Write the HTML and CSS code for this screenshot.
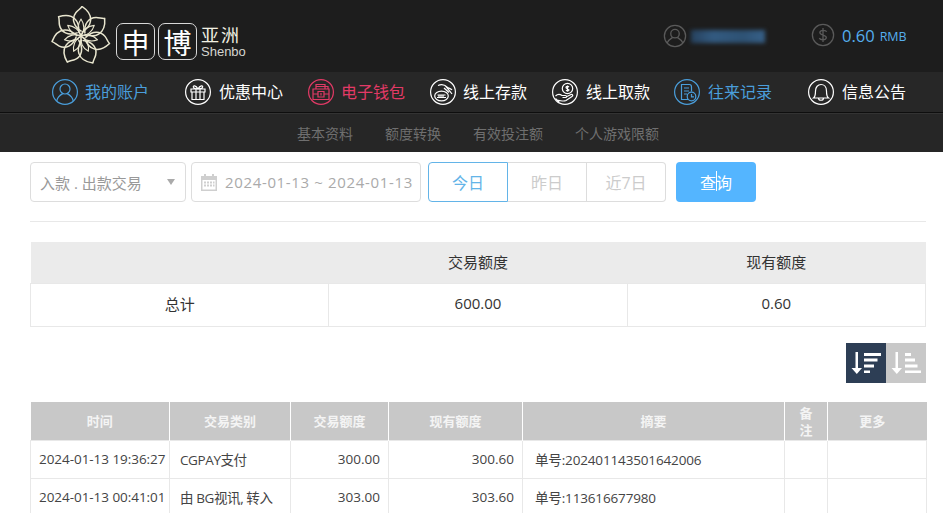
FILE: index.html
```html
<!DOCTYPE html>
<html lang="zh-CN">
<head>
<meta charset="utf-8">
<title>申博亚洲</title>
<link rel="stylesheet" href="styles.css">
</head>
<body>
<header class="topbar">
  <div class="logo">
    <svg class="logo-flower" viewBox="-30 -30 60 60" fill="none" stroke="#e9e6cf" stroke-width="1.5" stroke-linejoin="round" stroke-linecap="round">
      <defs>
        <g id="petal">
          <path d="M0-5C-8-10-9.500-18-5-23.500C-3-26-0.500-27 1-29.500C5.500-26.500 10.500-22 9.500-15C9-10 5-6.500 1.500-4"/>
          <path d="M0 0C-4-5-3.500-12 0-17C3.500-12 4-5 0 0Z" stroke-width="1.100"/>
        </g>
      </defs>
      <use href="#petal"/>
      <use href="#petal" transform="rotate(51.4)"/>
      <use href="#petal" transform="rotate(102.9)"/>
      <use href="#petal" transform="rotate(154.3)"/>
      <use href="#petal" transform="rotate(205.7)"/>
      <use href="#petal" transform="rotate(257.1)"/>
      <use href="#petal" transform="rotate(308.6)"/>
    </svg>
    <span class="logo-box">申</span>
    <span class="logo-box">博</span>
    <span class="logo-text"><b>亚洲</b><i>Shenbo</i></span>
  </div>
  <div class="account">
    <svg class="acct-icon" viewBox="0 0 26 26" fill="none" stroke="#5a5a5a" stroke-width="1.4">
      <circle cx="13" cy="13" r="11.5"/>
      <circle cx="13" cy="10.5" r="4.6"/>
      <path d="M4.5 20.5C6 16.8 9 15.5 10.5 14.5M21.5 20.5C20 16.8 17 15.5 15.500 14.5"/>
    </svg>
    <span class="blurred"></span>
  </div>
  <div class="balance">
    <svg class="acct-icon" viewBox="0 0 26 26" fill="none" stroke="#5a5a5a" stroke-width="1.4">
      <circle cx="13" cy="13" r="11.5"/>
      <path d="M17 9.5C16 7.6 10 7 9.6 10.2C9.2 13.8 17 12.4 16.6 16C16.2 19 10 18.6 9 16.4M13 5.5V20.5"/>
    </svg>
    <span class="amount">0.60</span><span class="unit">RMB</span>
  </div>
</header>

<nav class="mainnav">
  <a class="navitem blue">
    <svg viewBox="0 0 26 26" fill="none" stroke="currentColor" stroke-width="1.2">
      <circle cx="13" cy="13" r="12.4"/>
      <circle cx="13" cy="10" r="5"/>
      <path d="M4.8 21.8C5.5 17.5 9 15.6 10.8 14.6M21.2 21.8C20.5 17.5 17 15.6 15.2 14.6"/>
    </svg>
    <span>我的账户</span>
  </a>
  <a class="navitem wide">
    <svg viewBox="0 0 26 26" fill="none" stroke="currentColor" stroke-width="1.2">
      <circle cx="13" cy="13" r="12.4"/>
      <path d="M6 10H20V13H6ZM7 13H19V20.5H7ZM11 10V20.5M15 10V20.5M13 10C11 6 7.5 6 8.5 8.5C9 9.6 11 10 13 10C15 10 17 9.6 17.5 8.5C18.5 6 15 6 13 10Z"/>
    </svg>
    <span>优惠中心</span>
  </a>
  <a class="navitem pink">
    <svg viewBox="0 0 26 26" fill="none" stroke="currentColor" stroke-width="1.2">
      <circle cx="13" cy="13" r="12.4"/>
      <path d="M5 10H21V20.5H5ZM8 10V5.5H17V10M8 7.5H20V10M10 12.5H16V18H10ZM5 15H10M16 15H21M13 14V16.5"/>
    </svg>
    <span>电子钱包</span>
  </a>
  <a class="navitem">
    <svg viewBox="0 0 26 26" fill="none" stroke="currentColor" stroke-width="1.2">
      <circle cx="13" cy="13" r="12.4"/>
      <path d="M8 6.5C12 4.5 15 6 17 8C19 9.5 21 9.5 22 11M15 6.5C17 9 20 12 22 15M14 9L19 13.5"/>
      <ellipse cx="11.5" cy="17" rx="6.8" ry="4.8"/>
      <path d="M7 18.5H16M7.5 16H15.5M9 15.5V18.5M11 15.5V18.5M13 15.5V18.5"/>
    </svg>
    <span>线上存款</span>
  </a>
  <a class="navitem wide">
    <svg viewBox="0 0 26 26" fill="none" stroke="currentColor" stroke-width="1.2">
      <circle cx="13" cy="13" r="12.4"/>
      <circle cx="15.5" cy="9.5" r="5.2"/>
      <path d="M17 8C16 7 14 7.2 14 8.6C14 10 17 9.4 17 11C17 12.2 14.8 12.2 14 11.2M15.5 6.4V12.8"/>
      <path d="M3.5 17C6 14.5 8 15 10 16.5H13.5C15 16.5 15 18.5 13.5 18.5H10.5M14 18L19 15.5C20.5 15 21.5 16.5 20 17.5L14 21.5C11 23 8 21 5.5 21.5M3.5 19.5L7 23"/>
    </svg>
    <span>线上取款</span>
  </a>
  <a class="navitem blue wide">
    <svg viewBox="0 0 26 26" fill="none" stroke="currentColor" stroke-width="1.2">
      <circle cx="13" cy="13" r="12.4"/>
      <path d="M14 20.5H7.5V5.5H15.5C17 5.5 17.5 6.5 17.5 8V12.5M10 9H15M10 12H15M10 15H13"/>
      <circle cx="17.5" cy="17.5" r="4.3"/>
      <path d="M17.5 15V17.8H20"/>
    </svg>
    <span>往来记录</span>
  </a>
  <a class="navitem wide">
    <svg viewBox="0 0 26 26" fill="none" stroke="currentColor" stroke-width="1.2">
      <circle cx="13" cy="13" r="12.4"/>
      <path d="M5.5 19C7.5 17.5 7.5 15.5 7.5 12C7.5 8 10 5.5 13 5.5C16 5.5 18.5 8 18.5 12C18.5 15.5 18.5 17.5 20.5 19ZM10.5 19C10.5 22 15.5 22 15.5 19"/>
    </svg>
    <span>信息公告</span>
  </a>
</nav>

<nav class="subnav">
  <a>基本资料</a>
  <a>额度转换</a>
  <a>有效投注额</a>
  <a>个人游戏限额</a>
</nav>

<main class="content">
  <form class="filters">
    <div class="select"><span>入款 . 出款交易</span><i class="caret"></i></div>
    <div class="daterange">
      <svg viewBox="0 0 16 18" fill="#cfcfcf">
        <path d="M0 3H3V1H5V3H11V1H13V3H16V18H0ZM1.5 7V16.5H14.5V7Z"/>
        <path d="M3 8.5H5V10.5H3ZM6 8.5H8V10.5H6ZM9 8.5H11V10.5H9ZM12 8.5H13.5V10.5H12ZM3 11.5H5V13.5H3ZM6 11.5H8V13.5H6ZM9 11.5H11V13.5H9ZM12 11.5H13.5V13.5H12Z"/>
      </svg>
      <span>2024-01-13 ~ 2024-01-13</span>
    </div>
    <div class="ranges">
      <a class="range active">今日</a>
      <a class="range">昨日</a>
      <a class="range">近7日</a>
    </div>
    <button class="search" type="button">查询</button>
  </form>

  <table class="summary">
    <thead>
      <tr><th></th><th>交易额度</th><th>现有额度</th></tr>
    </thead>
    <tbody>
      <tr><td>总计</td><td>600.00</td><td>0.60</td></tr>
    </tbody>
  </table>

  <div class="sorts">
    <a class="sort on">
      <svg viewBox="0 0 40 40" fill="#fff">
        <path d="M9.500 9H12V25H16L10.800 31L5.500 25H9.500Z"/>
        <path d="M18 10H35V13H18ZM18 15.500H31.500V18.500H18ZM18 21.500H28V24.500H18ZM18 27.500H24V30H18Z"/>
      </svg>
    </a>
    <a class="sort">
      <svg viewBox="0 0 40 40" fill="#fff">
        <path d="M9.500 9H12V25H16L10.800 31L5.500 25H9.500Z"/>
        <path d="M19 10H25V13H19ZM19 15.500H29V18.500H19ZM19 21.500H31.500V24.500H19ZM19 27.500H35V30H19Z"/>
      </svg>
    </a>
  </div>

  <table class="ledger">
    <colgroup>
      <col class="c1"><col class="c2"><col class="c3"><col class="c4"><col class="c5"><col class="c6"><col class="c7">
    </colgroup>
    <thead>
      <tr><th>时间</th><th>交易类别</th><th>交易额度</th><th>现有额度</th><th>摘要</th><th>备注</th><th class="more">更多</th></tr>
    </thead>
    <tbody>
      <tr><td class="stamp">2024-01-13 19:36:27</td><td class="left">CGPAY支付</td><td class="num">300.00</td><td class="num">300.60</td><td class="left memo">单号:202401143501642006</td><td></td><td></td></tr>
      <tr><td class="stamp">2024-01-13 00:41:01</td><td class="left">由 BG视讯, 转入</td><td class="num">303.00</td><td class="num">303.60</td><td class="left memo">单号:113616677980</td><td></td><td></td></tr>
    </tbody>
  </table>
</main>
</body>
</html>
```

FILE: styles.css
```css
* { box-sizing: border-box; }
html, body { margin: 0; height: 513px; overflow: hidden; background: #fff; }
body { font-family: "Open Sans", "Noto Sans CJK SC", sans-serif; font-size: 14px; color: #333; }
a { text-decoration: none; }

.topbar { height: 72px; background: #1d1d1d; display: flex; align-items: center; color: #fff; }
.logo { display: flex; align-items: center; margin-left: 51px; width: 612px; }
.logo-flower { width: 60px; height: 60px; margin-right: 5px; flex: none; }
.logo-box { width: 39px; height: 37px; margin-top: 11px; margin-right: 3px; border: 1.5px solid #d8d8d8; border-radius: 7px; display: flex; align-items: center; justify-content: center; font-family: "Noto Sans CJK SC", sans-serif; font-size: 28px; font-weight: 400; line-height: 1; color: #fff; }
.logo-text { display: flex; flex-direction: column; margin-left: 1px; margin-top: 11px; }
.logo-text b { font-family: "Noto Sans CJK SC", sans-serif; font-weight: 400; font-size: 18px; line-height: 20px; letter-spacing: 2px; color: #f1f0e2; }
.logo-text i { font-family: "Liberation Sans", sans-serif; font-style: normal; font-size: 13px; line-height: 15px; color: #d5d5d0; }
.account { display: flex; align-items: center; width: 148px; }
.acct-icon { width: 24px; height: 24px; flex: none; }
.blurred { width: 74px; height: 13px; margin-left: 4px; background: linear-gradient(90deg, #27425e, #335a80 30%, #2e5274 70%, #376088); filter: blur(2px); }
.balance { display: flex; align-items: center; margin-top: -2px; }
.amount { margin-left: 7px; font-size: 16.500px; color: #55aeee; }
.unit { margin-left: 5px; margin-top: 2px; font-size: 12.500px; color: #55aeee; }

.mainnav { height: 41px; background: #272727; border-bottom: 1px solid #0e0e0e; display: grid; grid-template-columns: 133px 123px 122px 122px 122px 134px auto; padding-left: 52px; align-items: center; }
.navitem { display: flex; align-items: center; gap: 7px; color: #fff; font-size: 16px; line-height: 26px; }
.navitem.wide { gap: 8px; }
.navitem svg { width: 26px; height: 26px; flex: none; }
.navitem.blue { color: #4a9edb; }
.navitem.pink { color: #e23a66; }

.subnav { height: 39px; background: #262626; border-top: 1px solid #333; display: flex; gap: 32px; padding-left: 297px; align-items: center; }
.subnav a { color: #6f6f6f; font-size: 14px; }

.content { padding: 10px 17px 0 30px; }
.filters { display: flex; height: 60px; padding-bottom: 19px; border-bottom: 1px solid #e8e8e8; }
.select, .daterange { height: 40px; border: 1px solid #ddd; border-radius: 4px; display: flex; align-items: center; color: #aaa; }
.select { width: 156px; padding: 0 10px 0 9px; justify-content: space-between; color: #999; font-size: 15px; margin-right: 5px; white-space: nowrap; }
.caret { width: 0; height: 0; border: 4px solid transparent; border-top: 6px solid #aaa; border-bottom: 0; }
.daterange { width: 230px; padding-left: 9px; gap: 8px; font-size: 15px; margin-right: 7px; white-space: nowrap; letter-spacing: .65px; }
.daterange svg { width: 16px; height: 18px; flex: none; }
.ranges { display: flex; width: 238px; height: 40px; margin-right: 10px; }
.range { flex: 1; display: flex; align-items: center; justify-content: center; border: 1px solid #ddd; border-left-width: 0; color: #ccc; font-size: 16px; }
.range:last-child { border-radius: 0 4px 4px 0; }
.range.active { border: 1px solid #63b4e8; border-radius: 4px 0 0 4px; color: #63b4e8; flex: 0 0 80px; }
.search { position: relative; width: 80px; height: 40px; border: 0; border-radius: 4px; background: #54b5ff; color: #fff; font: 16px "Noto Sans CJK SC", sans-serif; padding: 0; }
.search::after { content: ""; position: absolute; left: 40px; top: 9px; width: 1px; height: 20px; background: #fff; }

table { border-collapse: collapse; table-layout: fixed; width: 896px; }
.summary { margin-top: 20px; }
.summary th { height: 41px; background: #ebebeb; font-weight: 400; font-size: 15px; color: #333; padding: 0 0 2px; }
.summary td { height: 43px; border: 1px solid #e8e8e8; text-align: center; font-size: 15px; color: #333; padding: 0 0 3px; }

.sorts { display: flex; justify-content: flex-end; margin-top: 16px; }
.sort { width: 40px; height: 40px; background: #c8c8c8; display: block; }
.sort.on { background: #2d3e55; }
.sort svg { display: block; width: 40px; height: 40px; }

.ledger { margin-top: 19px; }
.c1 { width: 139px; } .c2 { width: 121px; } .c3 { width: 98px; } .c4 { width: 134px; } .c5 { width: 262px; } .c6 { width: 43px; } .c7 { width: 99px; }
.ledger th { height: 39px; background: #c8c8c8; color: #f4f4f4; font-size: 13px; font-weight: 700; line-height: 17px; padding: 2px 12px; border-left: 1px solid #fff; font-family: "Noto Sans CJK SC", sans-serif; }
.ledger th:first-child { border-left: 0; }
.ledger th.more { padding-right: 22px; }
.ledger td { height: 38px; border: 1px solid #e8e8e8; padding: 0 8px 2px; text-align: center; font-size: 13.500px; color: #444; white-space: nowrap; }
.ledger td.stamp { text-align: left; letter-spacing: -.05px; }
.ledger td.left { text-align: left; padding-left: 10px; letter-spacing: -.4px; }
.ledger td.memo { padding-left: 12px; letter-spacing: -.15px; }
.ledger td.num { text-align: right; padding-right: 8px; }
```
